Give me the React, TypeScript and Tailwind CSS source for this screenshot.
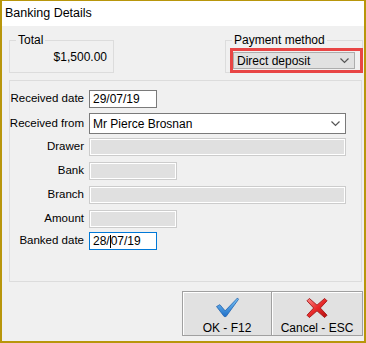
import React from "react";

const font = { fontFamily: '"Liberation Sans", Arial, sans-serif' };

function Chevron() {
  return (
    <svg width="9" height="6" viewBox="0 0 9 6" className="shrink-0">
      <path d="M0.5 0.5 L4.5 4.5 L8.5 0.5" fill="none" stroke="#555" strokeWidth="1.2" />
    </svg>
  );
}

function Disabled({ w }: { w: string }) {
  return <div className={`${w} h-[18px] border border-[#cccccc] bg-[#e0e0e0] shadow-[inset_0_0_0_1px_#ffffff]`} />;
}

function CheckIcon() {
  return (
    <svg width="25" height="22" viewBox="0 0 25 22">
      <defs>
        <linearGradient id="cg" x1="0" y1="0" x2="0" y2="1">
          <stop offset="0" stopColor="#7cc6f5" />
          <stop offset="1" stopColor="#1f6fc9" />
        </linearGradient>
      </defs>
      <path
        d="M1 10 L4.5 8 L10 14.5 L23 1 L24 2.5 L11 20.5 L9 20.5 Z"
        fill="url(#cg)"
        stroke="#1d5fae"
        strokeWidth="0.8"
        strokeLinejoin="round"
      />
    </svg>
  );
}

function XIcon() {
  return (
    <svg width="24" height="23" viewBox="0 0 24 23">
      <defs>
        <linearGradient id="xg" x1="0" y1="0" x2="1" y2="1">
          <stop offset="0" stopColor="#ff8a8a" />
          <stop offset="0.5" stopColor="#e82a2a" />
          <stop offset="1" stopColor="#b40f0f" />
        </linearGradient>
      </defs>
      <path
        d="M1.5 4 L4 1.5 L12 8.5 L20 1.5 L22.5 4 L15.5 11.5 L22.5 19 L20 21.5 L12 14.5 L4 21.5 L1.5 19 L8.5 11.5 Z"
        fill="url(#xg)"
        stroke="#a01010"
        strokeWidth="0.9"
        strokeLinejoin="round"
      />
    </svg>
  );
}

function Label({ children, mt }: { children: React.ReactNode; mt: string }) {
  return (
    <div className={`h-[18px] ${mt} flex items-center justify-end whitespace-nowrap`}>{children}</div>
  );
}

export default function App() {
  return (
    <div
      className="w-[366px] h-[343px] border-[#b8960b] border-l-2 border-r-2 border-b-2 border-t flex flex-col text-[11.5px] text-black bg-[#f0f0f0]"
      style={font}
    >
      <div className="h-[25px] bg-white flex items-center pl-[3px] text-[12.5px]">Banking Details</div>
      <div className="flex-1 flex flex-col">
        {/* top row */}
        <div className="flex mt-[14px] pl-[7px]">
          <div className="relative w-[105px] h-[33px] border border-[#dcdcdc]">
            <span className="absolute left-[6px] -top-[8px] bg-[#f0f0f0] px-[2px] leading-[14px] text-[12px]">Total</span>
            <div className="flex justify-end pr-[6px] pt-[9px] leading-[14px] text-[12px]">$1,500.00</div>
          </div>
          <div className="relative ml-[111px] w-[138px] h-[33px] border border-[#dcdcdc]">
            <span className="absolute left-[6px] -top-[8px] bg-[#f0f0f0] px-[2px] leading-[14px] text-[12px] whitespace-nowrap">Payment method</span>
            <div className="absolute left-[4px] top-[7px] w-[133px] h-[25px] border-[3px] border-[#e84545] pt-[1px] pr-[5px]">
              <div className="h-[17px] border border-[#adadad] bg-[#e1e1e1] flex items-center justify-between pl-[3px] pr-[5px]">
                <span className="leading-[14px] text-[12px]">Direct deposit</span>
                <Chevron />
              </div>
            </div>
          </div>
        </div>

        {/* main group */}
        <div className="ml-[7px] mt-[7px] w-[353px] h-[202px] border border-[#dcdcdc] pt-[9px]">
          <div className="grid grid-cols-[74px_1fr] gap-x-[5px] items-center">
            <Label mt="mt-0">Received date</Label>
            <div className="w-[68px] h-[18px] border border-[#7a7a7a] bg-white flex items-center pl-[3px] text-[12px]">29/07/19</div>

            <div className="h-[21px] mt-[5px] flex items-center justify-end whitespace-nowrap">Received from</div>
            <div className="w-[257px] h-[21px] mt-[5px] border border-[#7a7a7a] bg-white flex items-center justify-between pl-[3px] pr-[5px] text-[12px]">
              <span>Mr Pierce Brosnan</span>
              <Chevron />
            </div>

            <Label mt="mt-[4px]">Drawer</Label>
            <div className="mt-[4px]"><Disabled w="w-[257px]" /></div>

            <Label mt="mt-[6px]">Bank</Label>
            <div className="mt-[6px]"><Disabled w="w-[88px]" /></div>

            <Label mt="mt-[6px]">Branch</Label>
            <div className="mt-[6px]"><Disabled w="w-[257px]" /></div>

            <Label mt="mt-[6px]">Amount</Label>
            <div className="mt-[6px]"><Disabled w="w-[88px]" /></div>

            <Label mt="mt-[4px]">Banked date</Label>
            <div className="w-[68px] h-[18px] mt-[4px] border border-[#0078d7] bg-white flex items-center pl-[3px] text-[12px]">
              <span>28/</span>
              <span className="w-px h-[13px] bg-black" />
              <span>07/19</span>
            </div>
          </div>
        </div>

        {/* buttons */}
        <div className="flex justify-end mt-[9px] pr-[1px]">
          <div className="w-[90px] h-[45px] border border-[#a0a0a0] bg-[#e1e1e1] shadow-[inset_1px_1px_0_#ffffff] flex flex-col items-center pt-[5px]">
            <CheckIcon />
            <span className="mt-[3px] leading-[14px] text-[12px]">OK - F12</span>
          </div>
          <div className="w-[91px] h-[45px] border border-l-0 border-[#a0a0a0] bg-[#e1e1e1] shadow-[inset_1px_1px_0_#ffffff] flex flex-col items-center pt-[5px]">
            <XIcon />
            <span className="mt-[2px] leading-[14px] text-[12px]">Cancel - ESC</span>
          </div>
        </div>
      </div>
    </div>
  );
}
